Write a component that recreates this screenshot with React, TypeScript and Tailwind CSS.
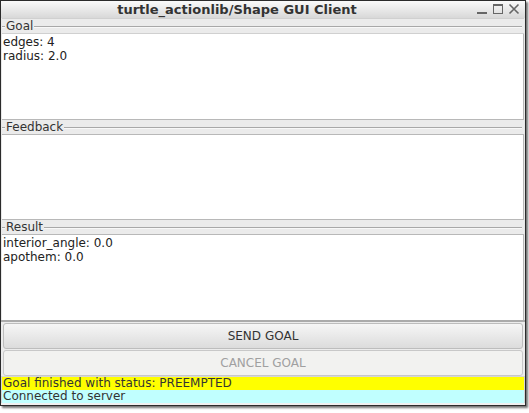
export default function App() {
  const sections = [
    { title: "Goal", lines: ["edges: 4", "radius: 2.0"] },
    { title: "Feedback", lines: [] as string[] },
    { title: "Result", lines: ["interior_angle: 0.0", "apothem: 0.0"] },
  ];

  return (
    <div
      className="h-[413px] w-[529px] bg-white"
      style={{ fontFamily: '"DejaVu Sans", sans-serif' }}
    >
      <div className="flex h-[406px] w-[526px] flex-col border border-[#2b2b2b] bg-[#d6d6d6] shadow-[2px_2px_2px_rgba(0,0,0,0.55)]">
        {/* title bar */}
        <div className="relative flex h-[17px] shrink-0 items-center justify-center bg-gradient-to-b from-[#fafafa] to-[#d8d8d8] pr-[52px]">
          <span className="text-[13px] font-bold leading-none text-[#333]">
            turtle_actionlib/Shape GUI Client
          </span>
          <div className="absolute right-[5px] top-[2px] flex items-center gap-[4px]">
            <svg width="12" height="12" viewBox="0 0 12 12">
              <rect x="1" y="9" width="10" height="2" fill="#666" />
            </svg>
            <svg width="12" height="12" viewBox="0 0 12 12">
              <rect x="1.5" y="1.5" width="9" height="9" fill="none" stroke="#666" strokeWidth="1" />
              <rect x="1" y="1" width="10" height="2" fill="#666" />
            </svg>
            <svg width="12" height="12" viewBox="0 0 12 12">
              <path d="M1.5 1.5 L10.5 10.5 M10.5 1.5 L1.5 10.5" stroke="#666" strokeWidth="1.6" />
            </svg>
          </div>
        </div>

        {/* panels */}
        <div className="flex flex-1 flex-col border-x border-[#e8e8e8]">
          {sections.map((s, i) => (
            <div key={s.title} className="flex flex-1 flex-col">
              <div
                className={`relative flex h-[16px] shrink-0 items-center bg-[#ebebeb] ${
                  i === 0 ? "border-t border-[#d0d0d0]" : "border-t border-[#aaaaaa]"
                } border-b border-[#b8b8b8]`}
              >
                <div className="absolute left-0 right-[2px] top-[7px] h-px bg-[#a8a8a8]" />
                <div className="absolute left-0 right-[2px] top-[8px] h-px bg-[#f8f8f8]" />
                <span className="relative ml-[3px] bg-[#ebebeb] px-[1px] text-[12px] leading-none text-[#333]">
                  {s.title}
                </span>
              </div>
              <div className="flex-1 border-r border-[#b8b8b8] bg-white pl-[1px] pt-[1px] text-[12px] leading-[14px] text-[#222]">
                {s.lines.map((l) => (
                  <div key={l}>{l}</div>
                ))}
              </div>
            </div>
          ))}
        </div>

        {/* buttons */}
        <div className="flex shrink-0 flex-col gap-[1px] border-t-2 border-[#ababab] bg-[#ececec] px-[2px] pt-[1px]">
          <button className="h-[26px] rounded-[3px] border border-[#bdbdbd] bg-gradient-to-b from-[#f6f6f6] to-[#dcdcdc] text-[12px] text-[#333]">
            SEND GOAL
          </button>
          <button className="h-[26px] rounded-[3px] border border-[#c8c8c8] bg-[#f2f2f0] text-[12px] text-[#a0a0a0]">
            CANCEL GOAL
          </button>
        </div>

        {/* status */}
        <div className="mt-[1px] shrink-0 px-[1px]">
          <div className="h-[13px] bg-[#ffff00] pl-[1px] text-[12px] leading-[13px] text-[#333]">
            Goal finished with status: PREEMPTED
          </div>
          <div className="h-[13px] bg-[#c0ffff] pl-[1px] text-[12px] leading-[13px] text-[#333]">
            Connected to server
          </div>
        </div>
        <div className="h-[2px] shrink-0 bg-[#f0f0f0]" />
      </div>
    </div>
  );
}
